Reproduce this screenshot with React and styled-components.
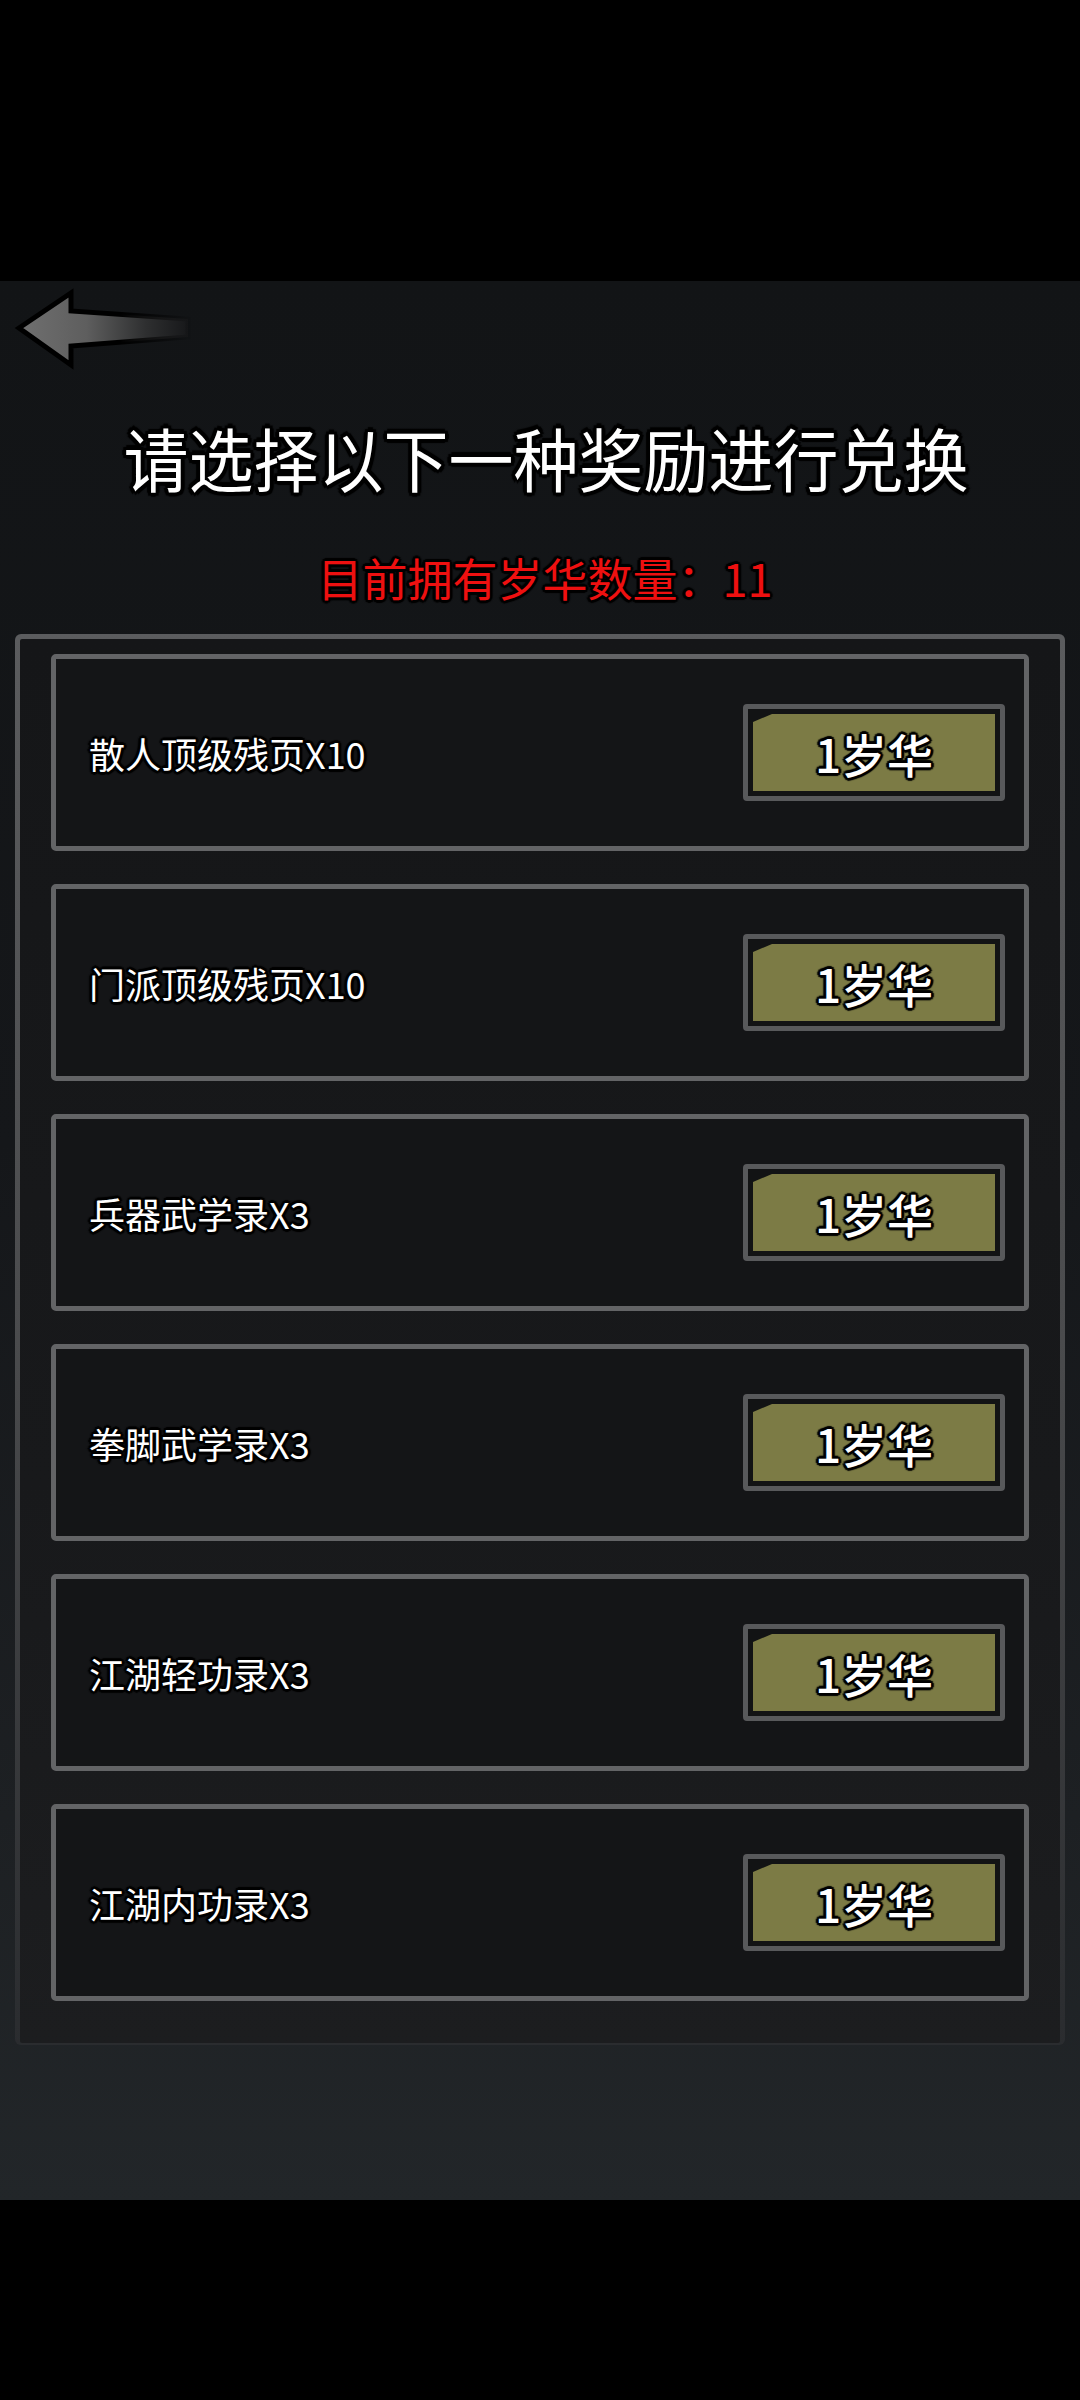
import React from "react";
import styled, { createGlobalStyle } from "styled-components";

const GlobalStyle = createGlobalStyle`
  html, body {
    margin: 0;
    padding: 0;
    background: #000;
  }
  body {
    font-family: "Noto Sans CJK SC", "Noto Sans", sans-serif;
  }
`;

const outline = (w, color = "#000") => {
  const d = Math.round(w * 0.72);
  return `
    text-shadow:
      ${w}px 0 1px ${color}, -${w}px 0 1px ${color},
      0 ${w}px 1px ${color}, 0 -${w}px 1px ${color},
      ${d}px ${d}px 1px ${color}, -${d}px ${d}px 1px ${color},
      ${d}px -${d}px 1px ${color}, -${d}px -${d}px 1px ${color};
  `;
};

const rewards = [
  { name: "散人顶级残页X10", cost: 1 },
  { name: "门派顶级残页X10", cost: 1 },
  { name: "兵器武学录X3", cost: 1 },
  { name: "拳脚武学录X3", cost: 1 },
  { name: "江湖轻功录X3", cost: 1 },
  { name: "江湖内功录X3", cost: 1 },
];

const Screen = styled.div`
  width: 1080px;
  height: 2400px;
  display: flex;
  flex-direction: column;
  background: #000;
`;

const Letterbox = styled.div`
  height: ${(p) => p.h}px;
  flex-shrink: 0;
  background: #000;
`;

const Stage = styled.div`
  height: 1919px;
  flex-shrink: 0;
  display: flex;
  flex-direction: column;
  align-items: center;
  background: linear-gradient(180deg, #121416 0%, #15171a 45%, #1d2023 80%, #222629 100%);
`;

const TopBar = styled.div`
  align-self: stretch;
  height: 90px;
  display: flex;
  align-items: flex-start;
  padding: 4px 0 0 10px;
  box-sizing: border-box;
`;

const BackButton = styled.button`
  border: 0;
  background: none;
  padding: 0;
  cursor: pointer;
  display: block;
`;

const Title = styled.h1`
  margin: 51px 0 0 12px;
  font-size: 65px;
  line-height: 70px;
  font-weight: 400;
  color: #fff;
  transform: scaleY(1.06);
  ${outline(4)}
`;

const Balance = styled.div`
  margin: 64px 0 0 10px;
  font-size: 45px;
  line-height: 44px;
  font-weight: 400;
  color: #ee1010;
  ${outline(3)}
`;

const PanelFrame = styled.div`
  align-self: stretch;
  margin: 34px 15px 0;
  padding: 5px 5px 2px;
  border-radius: 6px;
  background: linear-gradient(180deg, #5b5c5e 0%, #4a4b4d 50%, #2a2c2f 100%);
`;

const Panel = styled.div`
  display: flex;
  flex-direction: column;
  gap: 33px;
  padding: 15px 31px 42px;
  border-radius: 2px;
  background: linear-gradient(180deg, #151618 0%, #18191b 60%, #1c1d1f 100%);
`;

const Card = styled.div`
  height: 197px;
  box-sizing: border-box;
  border: 5px solid #636466;
  border-radius: 5px;
  background: #141517;
  display: flex;
  align-items: center;
  justify-content: space-between;
  padding: 0 19px 0 33px;
`;

const ItemName = styled.span`
  font-size: 36px;
  line-height: 40px;
  color: #fff;
  ${outline(3)}
`;

const CostButton = styled.button`
  width: 262px;
  height: 97px;
  box-sizing: border-box;
  border: 5px solid #58595b;
  border-radius: 4px;
  background: #121314;
  padding: 5px;
  cursor: pointer;
  display: flex;
`;

const CostFace = styled.span`
  flex: 1;
  display: flex;
  align-items: center;
  justify-content: center;
  background: #7c7b45;
  clip-path: polygon(19px 0, 100% 0, 100% 100%, 0 100%, 0 8px);
  font-family: "Noto Sans CJK SC", sans-serif;
  font-size: 46px;
  font-weight: 500;
  color: #fff;
  ${outline(3)}
`;

const BackArrow = () => (
  <svg width="190" height="90" viewBox="0 0 190 90">
    <defs>
      <linearGradient id="arrowFill" x1="0" y1="0" x2="1" y2="0">
        <stop offset="0" stopColor="#707070" />
        <stop offset="0.4" stopColor="#5e5e5e" />
        <stop offset="0.75" stopColor="#2e2f30" />
        <stop offset="1" stopColor="#17181a" />
      </linearGradient>
      <linearGradient id="arrowEdge" x1="0" y1="0" x2="1" y2="0">
        <stop offset="0" stopColor="#000" />
        <stop offset="0.6" stopColor="#000" />
        <stop offset="1" stopColor="#000" stopOpacity="0.1" />
      </linearGradient>
    </defs>
    <polygon
      points="9,43 61,8 61,26 178,34 178,52 61,61 61,80"
      fill="url(#arrowFill)"
      stroke="url(#arrowEdge)"
      strokeWidth="5"
      strokeLinejoin="miter"
    />
  </svg>
);

export default function App() {
  return (
    <>
      <GlobalStyle />
      <Screen>
        <Letterbox h={281} />
        <Stage>
          <TopBar>
            <BackButton aria-label="返回">
              <BackArrow />
            </BackButton>
          </TopBar>
          <Title>请选择以下一种奖励进行兑换</Title>
          <Balance>目前拥有岁华数量：11</Balance>
          <PanelFrame>
            <Panel>
              {rewards.map((r) => (
                <Card key={r.name}>
                  <ItemName>{r.name}</ItemName>
                  <CostButton>
                    <CostFace>{r.cost}岁华</CostFace>
                  </CostButton>
                </Card>
              ))}
            </Panel>
          </PanelFrame>
        </Stage>
        <Letterbox h={200} />
      </Screen>
    </>
  );
}
